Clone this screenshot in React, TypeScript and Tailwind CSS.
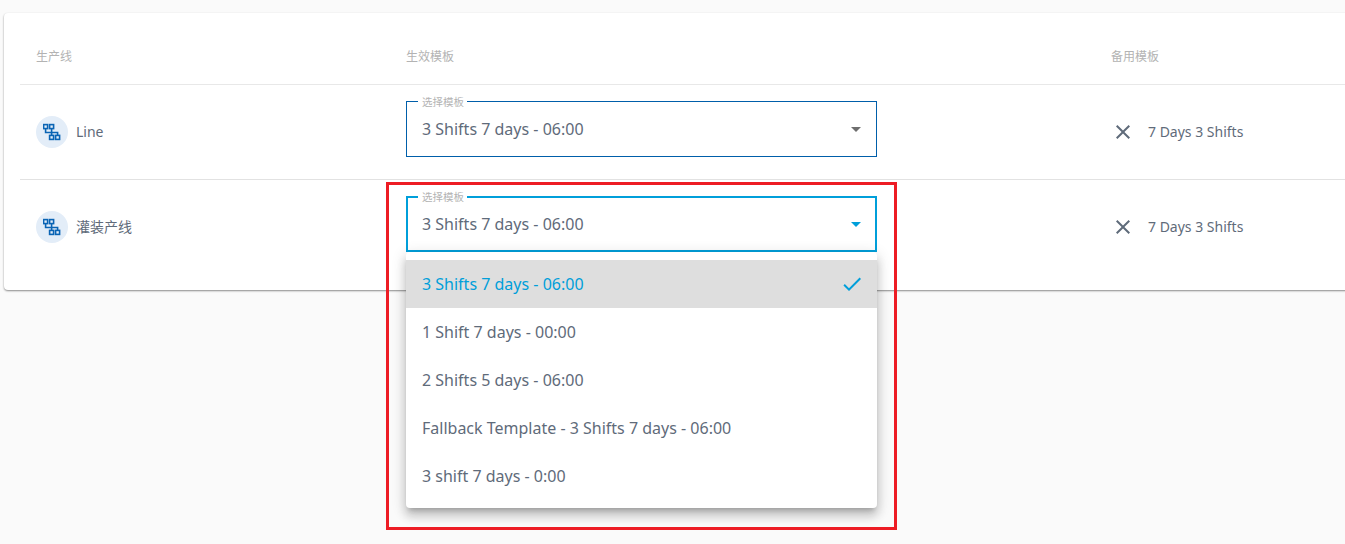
import React from "react";

const options = [
  "3 Shifts 7 days - 06:00",
  "1 Shift 7 days - 00:00",
  "2 Shifts 5 days - 06:00",
  "Fallback Template - 3 Shifts 7 days - 06:00",
  "3 shift 7 days - 0:00",
];

function LineIcon() {
  return (
    <svg width="18" height="18" viewBox="0 0 18 18" fill="none" stroke="#0a64b4" strokeWidth="1.6">
      <rect x="0.6" y="1.6" width="4" height="4" />
      <rect x="6.6" y="1.6" width="4" height="4" />
      <rect x="6.6" y="12.4" width="4" height="4" />
      <rect x="12.6" y="12.4" width="4" height="4" />
      <path d="M2.6 6V9.5H14.6V12M8.6 6V12" />
    </svg>
  );
}

function CloseIcon() {
  return (
    <svg width="24" height="24" viewBox="0 0 24 24" fill="#5f6b7a">
      <path d="M19 6.41 17.59 5 12 10.59 6.41 5 5 6.41 10.59 12 5 17.59 6.41 19 12 13.41 17.59 19 19 17.59 13.41 12z" />
    </svg>
  );
}

function TemplateSelect({ open }: { open?: boolean }) {
  return (
    <div className={open ? "relative flex h-14 w-[471px] items-center justify-between border-2 border-[#009fda] pl-[14px] pr-[7px]" : "relative flex h-14 w-[471px] items-center justify-between border border-[#005eaa] pl-[15px] pr-2"}>
      <span className={open ? "absolute -top-[8px] left-[10px] bg-white pl-1 pr-[3px] text-[10.5px] leading-[14px] text-[#b3b3b3]" : "absolute -top-[7px] left-[11px] bg-white pl-1 pr-[3px] text-[10.5px] leading-[14px] text-[#b3b3b3]"}>
        选择模板
      </span>
      <span className="text-base text-[#5f6b7a]">3 Shifts 7 days - 06:00</span>
      <svg width="24" height="24" viewBox="0 0 24 24" fill={open ? "#009fda" : "#6e6e6e"}>
        <path d="M7 10l5 5 5-5z" />
      </svg>
    </div>
  );
}

function Row({ name, open, last }: { name: string; open?: boolean; last?: boolean }) {
  return (
    <div className={last ? "grid h-[95px] grid-cols-[370px_705px_1fr] border-b border-transparent" : "grid h-[95px] grid-cols-[370px_705px_1fr] border-b border-[#e2e2e2]"}>
      <div className="flex items-center gap-2 px-4">
        <div className="flex h-8 w-8 items-center justify-center rounded-full bg-[#e3edf8]">
          <LineIcon />
        </div>
        <span className="text-sm text-[#5f6b7a]">{name}</span>
      </div>
      <div className="relative px-4 pt-4">
        <TemplateSelect open={open} />
        {open && (
          <div className="absolute left-4 top-[72px] z-10 w-[471px] rounded bg-white py-2 shadow-[0_5px_5px_-3px_rgba(0,0,0,0.2),0_8px_10px_1px_rgba(0,0,0,0.14),0_3px_14px_2px_rgba(0,0,0,0.12)]">
            {options.map((o, i) => (
              <div
                key={o}
                className={i === 0 ? "flex h-12 items-center justify-between bg-[#dedede] pl-4 pr-[13px] text-base text-[#009fda]" : "flex h-12 items-center pl-4 text-base text-[#5f6b7a]"}
              >
                <span>{o}</span>
                {i === 0 && (
                  <svg width="24" height="24" viewBox="0 0 24 24" fill="#009fda">
                    <path d="M9 16.17 4.83 12l-1.41 1.41L9 19 21 7l-1.41-1.41z" />
                  </svg>
                )}
              </div>
            ))}
          </div>
        )}
      </div>
      <div className="flex items-center gap-[13px] px-4">
        <CloseIcon />
        <span className="text-sm text-[#5f6b7a]">7 Days 3 Shifts</span>
      </div>
    </div>
  );
}

export default function App() {
  return (
    <div className="relative h-[544px] w-[1345px] overflow-hidden bg-[#fafafa] pl-1 pt-[13px] font-['Noto_Sans','Noto_Sans_CJK_SC',sans-serif]">
      <div className="w-[1400px] rounded bg-white pb-[15px] pl-4 pt-4 shadow-[0_1px_2px_rgba(0,0,0,0.45)]">
        <div className="grid h-[56px] grid-cols-[370px_705px_1fr] items-center border-b border-[#e8e8e8] text-xs text-[#b3b3b3]">
          <span className="px-4">生产线</span>
          <span className="px-4">生效模板</span>
          <span className="px-4">备用模板</span>
        </div>
        <Row name="Line" />
        <Row name="灌装产线" open last />
      </div>
      <div className="absolute left-[386px] top-[182px] z-20 h-[348px] w-[511px] border-[3px] border-[#ed1c24]" />
    </div>
  );
}
